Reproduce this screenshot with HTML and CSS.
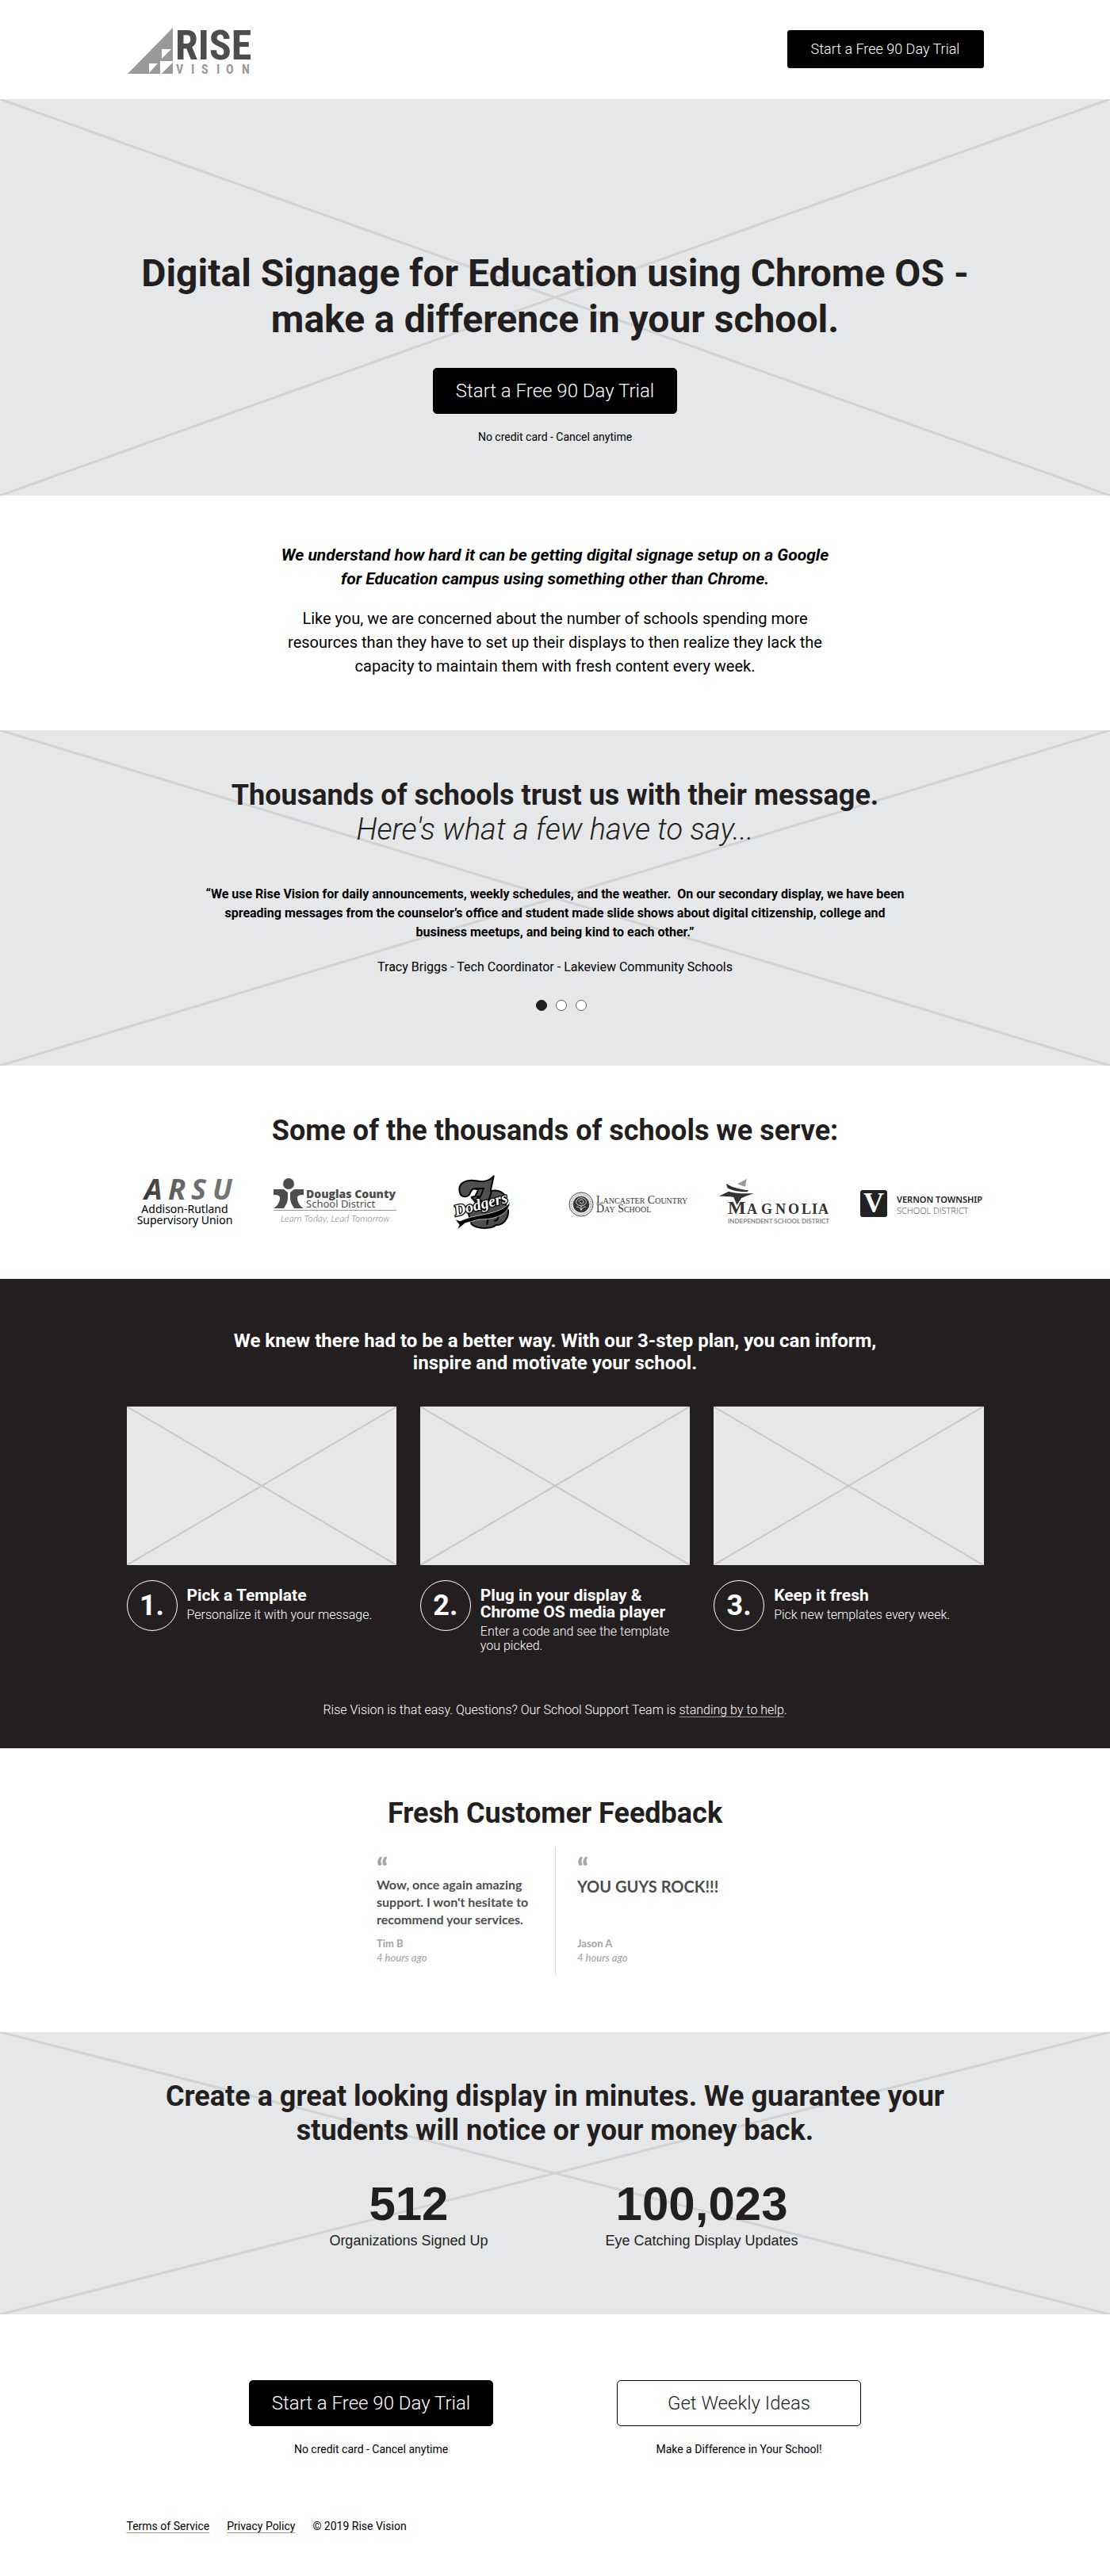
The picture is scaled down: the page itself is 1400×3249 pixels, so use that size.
FILE: index.html
```html
<!DOCTYPE html>
<html lang="en">
<head>
<meta charset="utf-8">
<meta name="viewport" content="width=device-width, initial-scale=1">
<title>Rise Vision - Digital Signage for Education</title>
<link rel="stylesheet" href="styles.css">
</head>
<body>
<header class="site-header">
  <div class="container header-row">
    <a href="#" class="brand" aria-label="Rise Vision">
      <svg width="160" height="64" viewBox="0 0 160 64">
        <path d="M1 62 58 4v58z" fill="#999"/>
        <path d="M44 31h12L44 43zM28 49h11L28 61z" fill="#fff"/>
        <path d="M42 46h17v1L43 63h-1z" fill="#fff"/>
        <path d="M58 48v14H44z" fill="#999"/>
        <text class="logo-rise" x="61" y="44">RISE</text>
        <text class="logo-vision" x="62 81 94 113 125 145" y="62">VISION</text>
      </svg>
    </a>
    <button type="button" class="btn btn-small">Start a Free 90 Day Trial</button>
  </div>
</header>

<main>
<section class="hero crossed">
  <svg class="cross" viewBox="0 0 100 100" preserveAspectRatio="none" aria-hidden="true"><path d="M0 0 100 100M100 0 0 100"/></svg>
  <h1>Digital Signage for Education using Chrome OS -<br>make a difference in your school.</h1>
  <button type="button" class="btn">Start a Free 90 Day Trial</button>
  <p class="note">No credit card - Cancel anytime</p>
</section>

<section class="intro">
  <p class="lead">We understand how hard it can be getting digital signage setup on a Google<br>for Education campus using something other than Chrome.</p>
  <p class="body-text">Like you, we are concerned about the number of schools spending more<br>resources than they have to set up their displays to then realize they lack the<br>capacity to maintain them with fresh content every week.</p>
</section>

<section class="testimonials crossed">
  <svg class="cross" viewBox="0 0 100 100" preserveAspectRatio="none" aria-hidden="true"><path d="M0 0 100 100M100 0 0 100"/></svg>
  <h2>Thousands of schools trust us with their message.</h2>
  <p class="subtitle">Here's what a few have to say...</p>
  <blockquote>“We use Rise Vision for daily announcements, weekly schedules, and the weather.&nbsp; On our secondary display, we have been<br>spreading messages from the counselor’s office and student made slide shows about digital citizenship, college and<br>business meetups, and being kind to each other.”</blockquote>
  <p class="attribution">Tracy Briggs - Tech Coordinator - Lakeview Community Schools</p>
  <div class="dots">
    <button type="button" class="dot dot-active" aria-label="Testimonial 1"></button>
    <button type="button" class="dot" aria-label="Testimonial 2"></button>
    <button type="button" class="dot" aria-label="Testimonial 3"></button>
  </div>
</section>

<section class="schools">
  <h2>Some of the thousands of schools we serve:</h2>
  <div class="logos">
    <svg width="160" height="70" viewBox="0 0 160 70">
      <defs><linearGradient id="fade" x1="0" x2="1"><stop offset="0" stop-color="#333"/><stop offset=".4" stop-color="#666"/><stop offset="1" stop-color="#777"/></linearGradient></defs>
      <text class="arsu" x="27 57 86 113" y="32" fill="url(#fade)">ARSU</text>
      <text class="arsu-name" x="78" y="49">Addison-Rutland</text>
      <text class="arsu-name" x="78" y="63">Supervisory Union</text>
    </svg>
    <svg width="160" height="70" viewBox="0 0 160 70">
      <g fill="#4d4d4d">
        <circle cx="23" cy="12" r="7"/>
        <path d="M4 19h13l5 4v7c0 6-3 9-5 13H4c5-3 8-8 8-13 0-3-2-4-8-4z"/>
        <path d="M42 19H30l-5 4v7c0 6 3 9 5 13h12c-5-3-8-8-8-13 0-3 2-4 8-4z"/>
      </g>
      <text class="douglas" x="45" y="30">Douglas County</text>
      <text class="douglas-sub" x="45" y="42">School District</text>
      <path d="M4 45.500H159" stroke="#999"/>
      <text class="douglas-tag" x="13" y="60">Learn Today, Lead Tomorrow</text>
    </svg>
    <svg width="160" height="70" viewBox="0 0 160 70">
      <g transform="translate(33 -1) scale(.3333)" stroke-linejoin="round">
        <path d="M60 72C50 36 84 22 120 28 150 34 170 30 188 10L176 66C215 58 245 82 233 118 256 150 236 195 196 196 180 210 126 212 104 192L92 150 122 112 104 90 118 86 130 62C104 54 106 62 100 72 92 94 64 92 60 72Z" fill="#4f4f4f" stroke="#000" stroke-width="6"/>
        <path d="M115 57h35l-12 30h-12l8 18 10-2" fill="none" stroke="#000" stroke-width="6"/>
        <path d="M180 70l-12 34M172 150l-10 44M190 148c22 4 18 30 0 32" fill="none" stroke="#000" stroke-width="6"/>
        <path d="M42 174 62 180C120 150 210 162 250 108 244 156 196 174 134 174L80 188 50 212 58 194Z" fill="#000" stroke="#fff" stroke-width="2"/>
        <text class="dodgers" x="44" y="162" transform="rotate(-15 44 162)">Dodgers</text>
      </g>
    </svg>
    <svg width="160" height="70" viewBox="0 0 160 70">
      <g fill="none" stroke="#444">
        <circle cx="20" cy="38" r="15"/>
        <circle cx="20" cy="38" r="12.500" stroke="#999" stroke-width="2" stroke-dasharray="1 1"/>
        <circle cx="20" cy="38" r="10" fill="#333"/>
        <path d="M20 46V40M20 40c-6-1-8-5-5-8 2-3 8-3 10 0 3 3 1 7-5 8M17 35c0-4 6-4 6 0 0 3-5 3-4 0M14 41c2 0 5 2 6 4M26 41c-2 0-5 2-6 4" stroke="#ddd"/>
      </g>
      <text class="lancaster" x="39" y="37">Lancaster Country</text>
      <text class="lancaster" x="39" y="48">Day School</text>
    </svg>
    <svg width="160" height="70" viewBox="0 0 160 70">
      <g transform="translate(1 -5) scale(.3333)" fill="#333">
        <path d="M90 52 125 33 120 62C112 60 100 56 90 52Z" fill="#999"/>
        <path d="M48 50C70 66 104 72 132 76L128 82C96 82 66 76 52 66Z"/>
        <path d="M20 98 57 80C90 90 124 88 153 87L122 98 106 105 88 131 76 102C56 98 40 98 20 98Z"/>
      </g>
      <text class="magnolia" y="50"><tspan class="magnolia-cap" x="19">M</tspan><tspan x="43 61 79 95 112 125 133">AGNOLIA</tspan></text>
      <text class="magnolia-sub" x="19" y="62">INDEPENDENT SCHOOL DISTRICT</text>
    </svg>
    <svg width="160" height="70" viewBox="0 0 160 70">
      <rect y="20" width="34" height="34" rx="3" fill="#222"/>
      <text class="vernon-v" x="17" y="48">V</text>
      <text class="vernon" x="46" y="36">VERNON TOWNSHIP</text>
      <text class="vernon-sub" x="46" y="50">SCHOOL DISTRICT</text>
    </svg>
  </div>
</section>

<section class="plan">
  <div class="container">
    <h2 class="plan-title">We knew there had to be a better way. With our 3-step plan, you can inform,<br>inspire and motivate your school.</h2>
    <div class="steps">
      <article>
        <div class="thumb crossed"><svg class="cross cross-thin" viewBox="0 0 100 100" preserveAspectRatio="none" aria-hidden="true"><path d="M0 0 100 100M100 0 0 100"/></svg></div>
        <div class="step">
          <span class="step-number">1.</span>
          <div class="step-text"><h3>Pick a Template</h3><p>Personalize it with your message.</p></div>
        </div>
      </article>
      <article>
        <div class="thumb crossed"><svg class="cross cross-thin" viewBox="0 0 100 100" preserveAspectRatio="none" aria-hidden="true"><path d="M0 0 100 100M100 0 0 100"/></svg></div>
        <div class="step">
          <span class="step-number">2.</span>
          <div class="step-text"><h3>Plug in your display &amp;<br>Chrome OS media player</h3><p>Enter a code and see the template<br>you picked.</p></div>
        </div>
      </article>
      <article>
        <div class="thumb crossed"><svg class="cross cross-thin" viewBox="0 0 100 100" preserveAspectRatio="none" aria-hidden="true"><path d="M0 0 100 100M100 0 0 100"/></svg></div>
        <div class="step">
          <span class="step-number">3.</span>
          <div class="step-text"><h3>Keep it fresh</h3><p>Pick new templates every week.</p></div>
        </div>
      </article>
    </div>
    <p class="help">Rise Vision is that easy. Questions? Our School Support Team is <a href="#">standing by to help</a>.</p>
  </div>
</section>

<section class="feedback">
  <h2>Fresh Customer Feedback</h2>
  <div class="reviews">
    <article class="review">
      <div class="quote-mark">“</div>
      <p class="review-text">Wow, once again amazing<br>support. I won't hesitate to<br>recommend your services.</p>
      <p class="reviewer">Tim B</p>
      <p class="reviewer when">4 hours ago</p>
    </article>
    <article class="review">
      <div class="quote-mark">“</div>
      <p class="review-text review-big">YOU GUYS ROCK!!!</p>
      <p class="reviewer">Jason A</p>
      <p class="reviewer when">4 hours ago</p>
    </article>
  </div>
</section>

<section class="guarantee crossed">
  <svg class="cross" viewBox="0 0 100 100" preserveAspectRatio="none" aria-hidden="true"><path d="M0 0 100 100M100 0 0 100"/></svg>
  <h2>Create a great looking display in minutes. We guarantee your<br>students will notice or your money back.</h2>
  <div class="stats">
    <div><div class="stat-value">512</div><div class="stat-label">Organizations Signed Up</div></div>
    <div><div class="stat-value">100,023</div><div class="stat-label">Eye Catching Display Updates</div></div>
  </div>
</section>

<section class="actions">
  <div>
    <button type="button" class="btn">Start a Free 90 Day Trial</button>
    <p class="note">No credit card - Cancel anytime</p>
  </div>
  <div>
    <button type="button" class="btn btn-outline">Get Weekly Ideas</button>
    <p class="note">Make a Difference in Your School!</p>
  </div>
</section>
</main>

<footer class="container site-footer">
  <a href="#">Terms of Service</a>
  <a href="#">Privacy Policy</a>
  <span>© 2019 Rise Vision</span>
</footer>
</body>
</html>
```
FILE: styles.css
```css
* { box-sizing: border-box; }
body { margin: 0; background: #fff; color: #000; font-family: Roboto, sans-serif; font-size: 16px; line-height: 24px; }
h1, h2, h3, p, blockquote { margin: 0; }
svg { display: block; }
section { text-align: center; }
h1 { color: #231f20; font-size: 48px; line-height: 58px; }
h2 { color: #231f20; font-size: 36px; line-height: 43px; }

.container { width: 100%; max-width: 1121px; margin: 0 auto; padding: 0 20px; }

/* Buttons */
.btn { width: 308px; height: 58px; padding: 0; border: 1px solid #000; border-radius: 5px; background: #000; color: #fff; font: 300 24px/28px Roboto, sans-serif; cursor: pointer; }
.btn-small { width: 248px; height: 48px; border-radius: 3px; font-size: 18px; }
.btn-outline { background: #fff; color: #231f20; }
.note { margin-top: 19px; font-size: 14px; line-height: 20px; }

/* Placeholder areas with diagonals */
.crossed { position: relative; isolation: isolate; background: #e6e7e8; }
.cross { position: absolute; inset: 0; z-index: -1; width: 100%; height: 100%; fill: none; stroke: #d1d3d4; stroke-width: 3px; }
.cross path { vector-effect: non-scaling-stroke; }
.cross-thin { stroke: #c7c8ca; stroke-width: 2px; }

/* Header */
.header-row { display: flex; align-items: center; justify-content: space-between; padding-top: 30px; padding-bottom: 31px; }
.brand { margin-top: 1px; margin-bottom: -1px; }
.logo-rise { font: 700 52px "Roboto Condensed", Roboto, sans-serif; fill: #4d4d4d; }
.logo-vision { font: 700 16px "Roboto Condensed", Roboto, sans-serif; fill: #999; }

.hero { padding: 191px 20px 64px; }
.hero .btn { margin-top: 32px; }

.intro { padding: 60px 20px 66px; line-height: 30px; }
.lead { font-size: 21px; font-style: italic; font-weight: 700; }
.body-text { margin-top: 20px; font-size: 20px; }

.testimonials { padding: 61px 20px 69px; }
.subtitle { color: #231f20; font-size: 38px; line-height: 43px; font-style: italic; font-weight: 300; }
blockquote { margin-top: 48px; font-weight: 700; }
.attribution { margin-top: 20px; }
.dots { display: flex; justify-content: center; gap: 11px; margin-top: 29px; padding-left: 16px; }
.dot { width: 14px; height: 14px; padding: 0; border: 1px solid #58595b; border-radius: 50%; background: #fff; }
.dot-active { border-color: #231f20; background: #231f20; }

/* School logos */
.schools { padding: 61px 20px 62px; }
.logos { display: grid; grid-template-columns: repeat(6, 1fr); justify-items: center; max-width: 1116px; margin: 33px auto 0; }
.arsu { font: italic 700 36px "Noto Sans", sans-serif; }
.arsu-name { font: 14px "Noto Sans", sans-serif; text-anchor: middle; }
.douglas { font: 800 14px "Open Sans", sans-serif; fill: #4d4d4d; }
.douglas-sub { font: 13px "Noto Sans", sans-serif; fill: #4d4d4d; }
.douglas-tag { font: italic 300 12px Lato, sans-serif; fill: #777; }
.dodgers { font: italic 700 60px "Liberation Serif", serif; fill: #fff; stroke: #000; stroke-width: 8px; paint-order: stroke; }
.lancaster { font: 14px "Liberation Serif", serif; font-variant: small-caps; fill: #333; }
.magnolia { font: 700 18px "Liberation Serif", serif; fill: #333; }
.magnolia-cap { font-size: 24px; }
.magnolia-sub { font: 700 8px Lato, sans-serif; fill: #888; }
.vernon-v { font: 700 36px "Liberation Serif", serif; text-anchor: middle; fill: #fff; }
.vernon { font: 600 11px "Noto Sans", sans-serif; fill: #222; }
.vernon-sub { font: 300 11px "Open Sans", sans-serif; fill: #444; }

/* Three-step plan */
.plan { padding: 64px 0 36px; background: #231f20; color: #fff; }
.plan-title { color: #fff; font-size: 24px; line-height: 28px; }
.steps { display: grid; grid-template-columns: repeat(3, 1fr); gap: 30px; margin-top: 41px; text-align: left; }
.thumb { height: 200px; }
.step { display: flex; gap: 12px; margin-top: 19px; }
.step-number { flex: none; display: flex; align-items: center; justify-content: center; width: 64px; height: 64px; border: 1px solid #fff; border-radius: 50%; font-size: 36px; font-weight: 700; }
.step-text { padding-top: 9px; }
.step h3 { font-size: 21px; line-height: 21px; }
.step p { margin-top: 5px; line-height: 18px; font-weight: 300; }
.help { margin-top: 60px; font-weight: 300; }
a { color: inherit; text-decoration-line: underline; text-decoration-color: #999; text-decoration-thickness: 1px; text-underline-offset: 3px; }

/* Customer feedback */
.feedback { padding: 61px 20px 72px; }
.reviews { display: grid; grid-template-columns: 1fr 1fr; max-width: 450px; margin: 21px auto 0; font-family: Lato, sans-serif; text-align: left; color: #4d4d4d; }
.review { height: 161px; padding-top: 8px; }
.review + .review { padding-left: 27px; border-left: 1px solid #ddd; }
.quote-mark { height: 28px; color: #a5a5a5; font-size: 36px; line-height: 36px; font-weight: 900; }
.review-text { min-height: 66px; font-size: 16px; line-height: 22px; font-weight: 700; white-space: nowrap; }
.review-big { font-size: 20px; line-height: 26px; }
.reviewer { color: #a5a5a5; font-size: 13px; line-height: 18px; font-weight: 700; }
.review-text + .reviewer { margin-top: 10px; }
.when { font-style: italic; font-weight: 500; }

/* Guarantee */
.guarantee { padding: 60px 20px 81px; color: #231f20; }
.stats { display: flex; justify-content: center; gap: 148px; margin-top: 41px; padding-left: 22px; font-family: "Liberation Sans", Arial, sans-serif; }
.stat-value { font-size: 60px; line-height: 60px; font-weight: 700; }
.stat-label { margin-top: 4px; font-size: 18px; }

.actions { display: flex; justify-content: center; gap: 156px; padding-top: 83px; }
.site-footer { display: flex; gap: 22px; padding-top: 77px; padding-bottom: 53px; font-size: 14px; line-height: 20px; }
```
